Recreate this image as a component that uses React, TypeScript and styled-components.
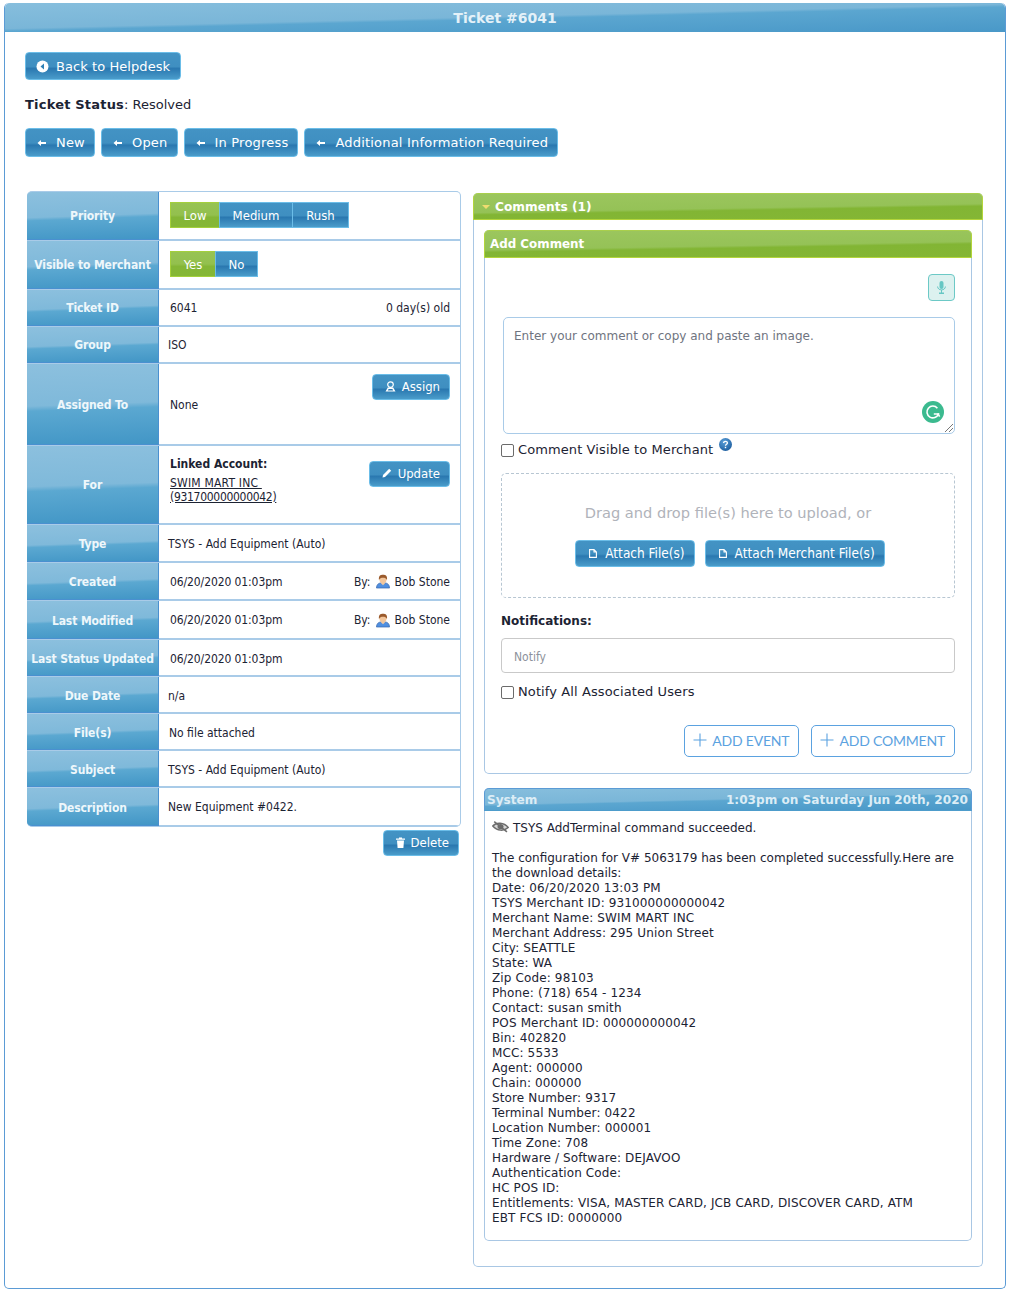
import React from 'react'
import styled, { createGlobalStyle } from 'styled-components'

const GlobalStyle = createGlobalStyle`
  html, body { margin: 0; padding: 0; background: #fff; }
  body { font-family: "DejaVu Sans", Verdana, sans-serif; font-size: 12px; color: #1c2333; }
`

const narrow = `"DejaVu Sans Condensed", "Noto Sans", sans-serif`

const blueGloss = `
  linear-gradient(178.6deg, #86bedd 0%, #7ab6d8 48%, #5ba6d0 53%, #4998c8 100%)
`
const labelGloss = `
  linear-gradient(178deg, #8cc0de 0%, #7fb9da 50%, #5ba8d1 56%, #4296c6 100%)
`
const greenGloss = `
  linear-gradient(179deg, #9cc65e 0%, #95c257 55%, #82b534 62%, #84b635 100%)
`
const buttonBlue = `
  linear-gradient(180deg, #4393c4 0%, #3f8fc1 52%, #2a78b0 60%, #4a9cca 100%)
`

const Page = styled.div`
  padding: 3px 9px 0 4px;
`

const MainPanel = styled.div`
  height: 1286px;
  border: 1px solid #5b9bd5;
  border-top: 0;
  border-radius: 5px;
  box-sizing: border-box;
`

const MainHeader = styled.div`
  height: 29px;
  border-radius: 5px 5px 0 0;
  background: ${blueGloss};
  color: #e4f1f8;
  font-weight: 700;
  font-size: 14px;
  line-height: 30px;
  text-align: center;
`

const Content = styled.div`
  padding: 20px 22px 0 20px;
`

const Button = styled.div<{ $h?: number }>`
  display: inline-flex;
  align-items: center;
  gap: 7px;
  box-sizing: border-box;
  height: ${(p) => p.$h ?? 29}px;
  padding: 0 10px;
  background: ${buttonBlue};
  border: 1px solid #6bbde8;
  border-radius: 4px;
  color: #fff;
  font-size: 13px;
  letter-spacing: 0.07px;
  white-space: nowrap;
`

const StatusButton = styled(Button)`
  gap: 9px;
  padding: 0 9px 0 11px;
  letter-spacing: 0.2px;
`

const StatusLine = styled.div`
  margin: 17px 0 0;
  font-size: 13px;
  line-height: 16px;
  b { font-weight: 700; letter-spacing: 0.2px; }
`

const ButtonRow = styled.div`
  display: flex;
  gap: 6px;
  margin-top: 15px;
`

const Columns = styled.div`
  display: flex;
  align-items: flex-start;
  margin-top: 34px;
  gap: 12px;
`

const LeftColumn = styled.div`
  width: 434px;
  margin-left: 2px;
`

const InfoTable = styled.div`
  border: 1px solid #a9cbe8;
  border-left: 0;
  border-radius: 5px;
  overflow: hidden;
  background: #a9cbe8;
`

const Row = styled.div<{ $h: number }>`
  display: flex;
  height: ${(p) => p.$h}px;
  box-sizing: border-box;
  & + & { margin-top: 1px; }
`

const Label = styled.div<{ $nudge?: boolean }>`
  flex: 0 0 132px;
  box-sizing: border-box;
  padding-top: ${(p) => (p.$nudge ? 2 : 0)}px;
  border-right: 1px solid #4a90d0;
  border-bottom: 1px solid #4a90d0;
  background: ${labelGloss};
  color: #eef7fb;
  font-family: ${narrow};
  font-weight: 700;
  font-size: 12px;
  letter-spacing: -0.1px;
  display: flex;
  align-items: center;
  justify-content: center;
  white-space: nowrap;
`

const Value = styled.div<{ $pad?: number; $nudge?: boolean }>`
  flex: 1;
  display: flex;
  align-items: center;
  justify-content: space-between;
  padding: ${(p) => (p.$nudge ? 3 : 1)}px 10px 0 ${(p) => p.$pad ?? 11}px;
  background: #fff;
  border-bottom: 1px solid #a9cbe8;
  font-family: ${narrow};
  font-size: 12px;
  min-width: 0;
`

const DateText = styled.span`
  letter-spacing: -0.1px;
`

const Toggle = styled.div`
  display: flex;
  margin-top: -2px;
`

const ToggleItem = styled.div<{ $on?: boolean; $w: number }>`
  width: ${(p) => p.$w}px;
  height: 26px;
  box-sizing: border-box;
  display: flex;
  align-items: center;
  justify-content: center;
  color: #fff;
  font-size: 13px;
  border: 1px solid ${(p) => (p.$on ? '#a4d03c' : '#6bbde8')};
  & + & { margin-left: -1px; }
  background: ${(p) =>
    p.$on
      ? 'linear-gradient(180deg, #97c353 0%, #93c04e 50%, #84b636 60%, #85b736 100%)'
      : buttonBlue};
`

const ByLine = styled.span`
  display: inline-flex;
  align-items: center;
  gap: 5px;
`

const LinkedBlock = styled.div`
  align-self: flex-start;
  padding-top: 10px;
  font-size: 12px;
  line-height: 14px;
  b { display: block; font-weight: 700; margin-bottom: 5px; font-family: ${narrow}; }
  a { color: #1c2333; text-decoration: underline; display: block; letter-spacing: 0.2px; }
  a + a { letter-spacing: -0.3px; }
`

const SmallButton = styled(Button)`
  height: 26px;
  padding: 0 9px 2px 12px;
  gap: 6px;
  font-family: ${narrow};
  font-size: 13px;
  letter-spacing: 0;
`

const SideButton = styled(SmallButton)<{ $top: number }>`
  align-self: flex-start;
  margin-top: ${(p) => p.$top}px;
`

const DeleteRow = styled.div`
  display: flex;
  justify-content: flex-end;
  margin-top: 3px;
  padding-right: 2px;
`

const RightPanel = styled.div`
  width: 510px;
  margin-top: 2px;
  height: 1074px;
  box-sizing: border-box;
  border: 1px solid #a9c7e4;
  border-top: 0;
  border-radius: 5px;
`

const GreenHeader = styled.div<{ $h: number }>`
  height: ${(p) => p.$h}px;
  margin: 0 -1px;
  box-sizing: border-box;
  border: 1px solid #b3d53c;
  border-top-color: #a9cf4c;
  border-radius: 5px 5px 0 0;
  background: ${greenGloss};
  color: #fff;
  font-weight: 700;
  font-size: 12.2px;
  display: flex;
  align-items: center;
  gap: 5px;
  padding-left: 8px;
`

const Caret = styled.span`
  width: 0;
  height: 0;
  border-left: 4px solid transparent;
  border-right: 4px solid transparent;
  border-top: 4px solid #f0dc70;
`

const RightBody = styled.div`
  padding: 10px 10px 0;
`

const AddCommentCard = styled.div`
  height: 544px;
  box-sizing: border-box;
  border: 1px solid #a9c7e4;
  border-top: 0;
  border-radius: 5px;
`

const AddCommentHeader = styled(GreenHeader)`
  padding-left: 5px;
  gap: 0;
  font-size: 11.9px;
`

const CardBody = styled.div`
  padding: 16px 16px 0;
`

const MicRow = styled.div`
  display: flex;
  justify-content: flex-end;
`

const MicButton = styled.div`
  width: 27px;
  height: 27px;
  box-sizing: border-box;
  border: 1px solid #6cc9c6;
  border-radius: 4px;
  background: #dcf1ef;
  display: flex;
  align-items: center;
  justify-content: center;
`

const CommentBox = styled.div`
  position: relative;
  margin: 16px 0 0 2px;
  height: 117px;
  box-sizing: border-box;
  border: 1px solid #a9cbe8;
  border-radius: 5px;
  padding: 11px 10px;
  color: #6f7480;
  font-size: 12px;
  line-height: 14px;
`

const GrammarlyBadge = styled.div`
  position: absolute;
  right: 10px;
  bottom: 10px;
  width: 22px;
  height: 22px;
`

const ResizeGrip = styled.svg`
  position: absolute;
  right: 0;
  bottom: 0;
`

const CheckLine = styled.label<{ $top: number }>`
  display: flex;
  align-items: center;
  gap: 4px;
  margin-top: ${(p) => p.$top}px;
  font-size: 13px;
  line-height: 16px;
  letter-spacing: 0.1px;
`

const CheckBox = styled.span`
  display: inline-block;
  width: 13px;
  height: 13px;
  box-sizing: border-box;
  border: 1px solid #6b6b6b;
  border-radius: 2px;
  background: #fff;
`

const HelpDot = styled.span`
  width: 13px;
  height: 13px;
  margin: -12px 0 0 2px;
  display: inline-flex;
`

const DropZone = styled.div`
  margin-top: 15px;
  height: 125px;
  box-sizing: border-box;
  border: 1px dashed #b7c6d2;
  border-radius: 5px;
  display: flex;
  flex-direction: column;
  align-items: center;
  padding-top: 30px;
`

const DropText = styled.div`
  color: #b0b3ba;
  font-size: 14.6px;
  line-height: 18px;
`

const DropButtons = styled.div`
  display: flex;
  gap: 10px;
  margin: 18px 0 0 4px;
`

const AttachButton = styled(Button)`
  height: 27px;
  padding: 0 9px 1px 13px;
  gap: 8px;
  font-family: ${narrow};
  font-size: 13.5px;
  letter-spacing: 0;
`

const NotifyLabel = styled.div`
  margin-top: 15px;
  font-weight: 700;
  font-size: 12px;
  line-height: 16px;
`

const NotifyInput = styled.div`
  margin-top: 9px;
  height: 35px;
  box-sizing: border-box;
  border: 1px solid #c9c9c9;
  border-radius: 4px;
  padding: 2px 0 0 12px;
  display: flex;
  align-items: center;
  color: #8d929b;
  font-family: ${narrow};
  font-size: 12px;
`

const ActionRow = styled.div`
  display: flex;
  justify-content: flex-end;
  gap: 12px;
  margin-top: 25px;
`

const OutlineButton = styled.div`
  display: flex;
  align-items: center;
  gap: 5px;
  height: 32px;
  box-sizing: border-box;
  padding: 0 9px 2px 8px;
  border: 1px solid #5ba2e0;
  border-radius: 5px;
  color: #5ba2e0;
  font-family: Lato, sans-serif;
  font-size: 14px;
  letter-spacing: -0.2px;
  white-space: nowrap;
`

const SystemCard = styled.div`
  margin-top: 14px;
  height: 453px;
  box-sizing: border-box;
  border: 1px solid #a9c7e4;
  border-top: 0;
  border-radius: 5px;
`

const SystemHeader = styled.div`
  height: 23px;
  margin: 0 -1px;
  box-sizing: border-box;
  border: 1px solid #5b9bd5;
  border-bottom-color: #4d9ccb;
  border-radius: 5px 5px 0 0;
  background: ${blueGloss};
  color: #dcedf6;
  font-weight: 700;
  font-size: 12.1px;
  display: flex;
  justify-content: space-between;
  align-items: center;
  padding: 0 3px 0 2px;
`

const SystemBody = styled.div`
  padding: 10px 7px 0;
  font-size: 12px;
  line-height: 15px;
`

const SystemLine = styled.div`
  display: flex;
  align-items: center;
  gap: 4px;
  margin-bottom: 15px;
  svg { margin-top: -3px; }
`

const DetailLine = styled.div`
  letter-spacing: 0.13px;
`

const ArrowIcon = () => (
  <svg width="10" height="8" viewBox="0 0 10 8">
    <path d="M0.5 4 L4 1 V3 H9 V5 H4 V7 Z" fill="#fff" />
  </svg>
)

const BackIcon = () => (
  <svg width="13" height="13" viewBox="0 0 13 13">
    <circle cx="6.5" cy="6.5" r="6" fill="#fff" />
    <path d="M8 3.5 L4.5 6.5 L8 9.5 Z" fill="#2f80b6" />
  </svg>
)

const AssignIcon = () => (
  <svg width="11" height="11" viewBox="0 0 11 11">
    <circle cx="5.5" cy="3.6" r="2.8" fill="none" stroke="#fff" strokeWidth="1.2" />
    <path d="M2.8 6.6 H8.2 L10.5 10.5 H0.5 Z M3.6 8 L2.8 9.4 H8.2 L7.4 8 Z" fill="#fff" fillRule="evenodd" />
  </svg>
)

const PencilIcon = () => (
  <svg width="10" height="10" viewBox="0 0 10 10">
    <path d="M0.5 9.5 L1 7 L7.2 0.8 L9.2 2.8 L3 9 Z" fill="#fff" />
  </svg>
)

const TrashIcon = () => (
  <svg width="9" height="11" viewBox="0 0 9 11">
    <path d="M0 1.5 H3 V0.5 H6 V1.5 H9 V2.8 H0 Z M1 3.6 H8 L7.4 11 H1.6 Z" fill="#fff" />
  </svg>
)

const FileIcon = () => (
  <svg width="8" height="9" viewBox="0 0 8 9">
    <path d="M0.6 0.6 H5 L7.4 3 V8.4 H0.6 Z M5 0.6 V3 H7.4" fill="none" stroke="#fff" strokeWidth="1.1" />
  </svg>
)

const MicIcon = () => (
  <svg width="9" height="13" viewBox="0 0 9 13">
    <rect x="2.5" y="0" width="4" height="8" rx="2" fill="#66c7c4" />
    <path d="M0.6 5.5 C0.6 10 8.4 10 8.4 5.5" fill="none" stroke="#66c7c4" />
    <rect x="4" y="9" width="1" height="3" fill="#66c7c4" />
    <rect x="2" y="11.5" width="5" height="1.5" fill="#66c7c4" />
  </svg>
)

const GrammarlyIcon = () => (
  <svg width="22" height="22" viewBox="0 0 22 22">
    <circle cx="11" cy="11" r="11" fill="#3bba8f" />
    <path d="M15.4 7.2 A5.9 5.9 0 1 0 16.4 13 L11.8 13" fill="none" stroke="#fff" strokeWidth="1.6" />
    <path d="M15.8 12.4 L17.6 15.6" stroke="#fff" strokeWidth="1.6" />
  </svg>
)

const HelpIcon = () => (
  <svg width="13" height="13" viewBox="0 0 13 13">
    <defs>
      <radialGradient id="helpBall" cx="40%" cy="30%" r="75%">
        <stop offset="0" stopColor="#5c9fd8" />
        <stop offset="1" stopColor="#1b5c9e" />
      </radialGradient>
    </defs>
    <circle cx="6.5" cy="6.5" r="6.5" fill="url(#helpBall)" />
    <path d="M4.6 5 C4.6 2.8 8.4 2.8 8.4 5 C8.4 6.4 6.5 6.2 6.5 7.8" fill="none" stroke="#fff" strokeWidth="1.3" />
    <rect x="5.8" y="8.8" width="1.4" height="1.4" fill="#fff" />
  </svg>
)

const AvatarIcon = () => (
  <svg width="14" height="15" viewBox="0 0 15 15">
    <path d="M0.5 14.5 C0.5 11 2.5 9.3 5 9 L10 9 C12.5 9.3 14.5 11 14.5 14.5 Z" fill="#4f8fe0" stroke="#2f5fa8" strokeWidth="0.7" />
    <path d="M5 9 L7.5 11.5 L10 9 Z" fill="#f0c8a0" />
    <ellipse cx="7.5" cy="5.4" rx="3.8" ry="4" fill="#f2c69c" />
    <path d="M3.2 6 C2.6 1.6 4.6 0.3 7.5 0.3 C10.4 0.3 12.4 1.6 11.8 6 C11 4 9.5 3.4 7.5 3.4 C5.5 3.4 4 4 3.2 6 Z" fill="#9a5a2c" />
  </svg>
)

const HiddenIcon = () => (
  <svg width="17" height="12" viewBox="0 0 17 12">
    <path d="M0.8 5 C4 1 12 1 16.2 6.5 C12 10.5 5 10 0.8 5 Z" fill="#d6d6d6" stroke="#6c6c6c" strokeWidth="1.5" />
    <ellipse cx="8.5" cy="5.6" rx="3" ry="2.7" fill="#6c6c6c" />
    <path d="M2.2 0.6 L15 10.8" stroke="#6c6c6c" strokeWidth="1.5" />
  </svg>
)

const PlusIcon = () => (
  <svg width="14" height="14" viewBox="0 0 14 14">
    <path d="M7 0.5 V13.5 M0.5 7 H13.5" stroke="#5ba2e0" strokeWidth="1.1" />
  </svg>
)

const statusButtons = ['New', 'Open', 'In Progress', 'Additional Information Required']

const systemLines = [
  'Date: 06/20/2020 13:03 PM',
  'TSYS Merchant ID: 931000000000042',
  'Merchant Name: SWIM MART INC',
  'Merchant Address: 295 Union Street',
  'City: SEATTLE',
  'State: WA',
  'Zip Code: 98103',
  'Phone: (718) 654 - 1234',
  'Contact: susan smith',
  'POS Merchant ID: 000000000042',
  'Bin: 402820',
  'MCC: 5533',
  'Agent: 000000',
  'Chain: 000000',
  'Store Number: 9317',
  'Terminal Number: 0422',
  'Location Number: 000001',
  'Time Zone: 708',
  'Hardware / Software: DEJAVOO',
  'Authentication Code:',
  'HC POS ID:',
  'Entitlements: VISA, MASTER CARD, JCB CARD, DISCOVER CARD, ATM',
  'EBT FCS ID: 0000000',
]

const Creator = () => (
  <ByLine>
    By: <AvatarIcon /> Bob Stone
  </ByLine>
)

export default function App() {
  return (
    <Page>
      <GlobalStyle />
      <MainPanel>
        <MainHeader>Ticket #6041</MainHeader>
        <Content>
          <Button $h={28}>
            <BackIcon />
            Back to Helpdesk
          </Button>
          <StatusLine>
            <b>Ticket Status</b>: Resolved
          </StatusLine>
          <ButtonRow>
            {statusButtons.map((name) => (
              <StatusButton key={name}>
                <ArrowIcon />
                {name}
              </StatusButton>
            ))}
          </ButtonRow>
          <Columns>
            <LeftColumn>
              <InfoTable>
                <Row $h={48}>
                  <Label>Priority</Label>
                  <Value>
                    <Toggle>
                      <ToggleItem $on $w={50}>Low</ToggleItem>
                      <ToggleItem $w={74}>Medium</ToggleItem>
                      <ToggleItem $w={57}>Rush</ToggleItem>
                    </Toggle>
                  </Value>
                </Row>
                <Row $h={48}>
                  <Label>Visible to Merchant</Label>
                  <Value>
                    <Toggle>
                      <ToggleItem $on $w={46}>Yes</ToggleItem>
                      <ToggleItem $w={43}>No</ToggleItem>
                    </Toggle>
                  </Value>
                </Row>
                <Row $h={36}>
                  <Label>Ticket ID</Label>
                  <Value>
                    <span>6041</span>
                    <span>0 day(s) old</span>
                  </Value>
                </Row>
                <Row $h={36}>
                  <Label>Group</Label>
                  <Value $pad={9}>ISO</Value>
                </Row>
                <Row $h={81}>
                  <Label $nudge>Assigned To</Label>
                  <Value>
                    <span>None</span>
                    <SideButton $top={9}>
                      <AssignIcon />
                      Assign
                    </SideButton>
                  </Value>
                </Row>
                <Row $h={78}>
                  <Label>For</Label>
                  <Value>
                    <LinkedBlock>
                      <b>Linked Account:</b>
                      <a>SWIM MART INC&nbsp;</a>
                      <a>(931700000000042)</a>
                    </LinkedBlock>
                    <SideButton $top={14}>
                      <PencilIcon />
                      Update
                    </SideButton>
                  </Value>
                </Row>
                <Row $h={37}>
                  <Label $nudge>Type</Label>
                  <Value $pad={9}>TSYS - Add Equipment (Auto)</Value>
                </Row>
                <Row $h={37}>
                  <Label $nudge>Created</Label>
                  <Value>
                    <DateText>06/20/2020 01:03pm</DateText>
                    <Creator />
                  </Value>
                </Row>
                <Row $h={38}>
                  <Label $nudge>Last Modified</Label>
                  <Value>
                    <DateText>06/20/2020 01:03pm</DateText>
                    <Creator />
                  </Value>
                </Row>
                <Row $h={36}>
                  <Label $nudge>Last Status Updated</Label>
                  <Value $nudge>
                    <DateText>06/20/2020 01:03pm</DateText>
                  </Value>
                </Row>
                <Row $h={36}>
                  <Label $nudge>Due Date</Label>
                  <Value $pad={9} $nudge>n/a</Value>
                </Row>
                <Row $h={36}>
                  <Label $nudge>File(s)</Label>
                  <Value $pad={10} $nudge>No file attached</Value>
                </Row>
                <Row $h={36}>
                  <Label $nudge>Subject</Label>
                  <Value $pad={9} $nudge>TSYS - Add Equipment (Auto)</Value>
                </Row>
                <Row $h={38}>
                  <Label $nudge>Description</Label>
                  <Value $pad={9}>New Equipment #0422.</Value>
                </Row>
              </InfoTable>
              <DeleteRow>
                <SmallButton>
                  <TrashIcon />
                  Delete
                </SmallButton>
              </DeleteRow>
            </LeftColumn>
            <RightPanel>
              <GreenHeader $h={27}>
                <Caret />
                Comments (1)
              </GreenHeader>
              <RightBody>
                <AddCommentCard>
                  <AddCommentHeader $h={28}>Add Comment</AddCommentHeader>
                  <CardBody>
                    <MicRow>
                      <MicButton>
                        <MicIcon />
                      </MicButton>
                    </MicRow>
                    <CommentBox>
                      Enter your comment or copy and paste an image.
                      <GrammarlyBadge>
                        <GrammarlyIcon />
                      </GrammarlyBadge>
                      <ResizeGrip width="10" height="10" viewBox="0 0 10 10">
                        <path d="M1 9 L9 1 M5 9 L9 5" stroke="#777" strokeWidth="1" />
                      </ResizeGrip>
                    </CommentBox>
                    <CheckLine $top={8}>
                      <CheckBox />
                      Comment Visible to Merchant
                      <HelpDot>
                        <HelpIcon />
                      </HelpDot>
                    </CheckLine>
                    <DropZone>
                      <DropText>Drag and drop file(s) here to upload, or</DropText>
                      <DropButtons>
                        <AttachButton>
                          <FileIcon />
                          Attach File(s)
                        </AttachButton>
                        <AttachButton>
                          <FileIcon />
                          Attach Merchant File(s)
                        </AttachButton>
                      </DropButtons>
                    </DropZone>
                    <NotifyLabel>Notifications:</NotifyLabel>
                    <NotifyInput>Notify</NotifyInput>
                    <CheckLine $top={11}>
                      <CheckBox />
                      Notify All Associated Users
                    </CheckLine>
                    <ActionRow>
                      <OutlineButton>
                        <PlusIcon />
                        ADD EVENT
                      </OutlineButton>
                      <OutlineButton>
                        <PlusIcon />
                        ADD COMMENT
                      </OutlineButton>
                    </ActionRow>
                  </CardBody>
                </AddCommentCard>
                <SystemCard>
                  <SystemHeader>
                    <span>System</span>
                    <span>1:03pm on Saturday Jun 20th, 2020</span>
                  </SystemHeader>
                  <SystemBody>
                    <SystemLine>
                      <HiddenIcon />
                      TSYS AddTerminal command succeeded.
                    </SystemLine>
                    <div>
                      The configuration for V# 5063179 has been completed successfully.Here are the
                      download details:
                    </div>
                    {systemLines.map((line) => (
                      <DetailLine key={line}>{line}</DetailLine>
                    ))}
                  </SystemBody>
                </SystemCard>
              </RightBody>
            </RightPanel>
          </Columns>
        </Content>
      </MainPanel>
    </Page>
  )
}
